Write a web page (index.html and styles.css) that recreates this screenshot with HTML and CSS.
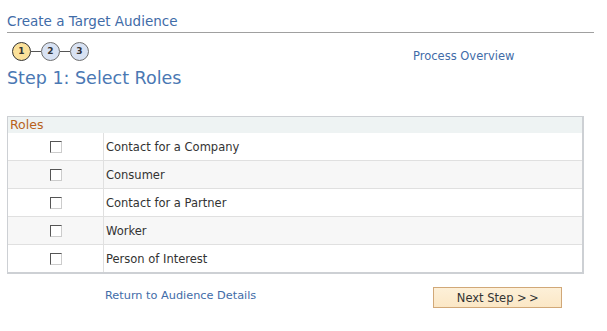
FILE: index.html
```html
<!DOCTYPE html>
<html>
<head>
<meta charset="utf-8">
<link rel="stylesheet" href="styles.css">
</head>
<body>
<div class="page">
  <div class="title">Create a Target Audience</div>
  <div class="steprow">
    <div class="steps">
      <span class="step current">1</span><span class="conn"></span><span class="step">2</span><span class="conn"></span><span class="step">3</span>
    </div>
    <a class="overview">Process Overview</a>
  </div>
  <h1 class="heading">Step 1: Select Roles</h1>
  <div class="grid">
    <div class="ghead">Roles</div>
    <div class="row"><div class="cb"><span class="box"></span></div><div class="lbl">Contact for a Company</div></div>
    <div class="row alt"><div class="cb"><span class="box"></span></div><div class="lbl">Consumer</div></div>
    <div class="row"><div class="cb"><span class="box"></span></div><div class="lbl">Contact for a Partner</div></div>
    <div class="row alt"><div class="cb"><span class="box"></span></div><div class="lbl">Worker</div></div>
    <div class="row last"><div class="cb"><span class="box"></span></div><div class="lbl">Person of Interest</div></div>
  </div>
  <div class="footer">
    <a class="ret">Return to Audience Details</a>
    <button class="next">Next Step &gt;&thinsp;&gt;</button>
  </div>
</div>
</body>
</html>
```
FILE: styles.css
```css
html, body { margin: 0; padding: 0; background: #fff; }
body { font-family: "DejaVu Sans", Verdana, sans-serif; }
.page { padding: 13px 13px 0 7px; width: 587px; }
.title { font-size: 13.5px; color: #3f6ca8; line-height: 16px; padding-bottom: 3px; border-bottom: 1px solid #a0a0a0; }
.steprow { display: flex; align-items: center; margin-top: 8px; height: 20px; }
.steps { display: flex; align-items: center; margin-left: 5px; width: 401px; }
.step { width: 17px; height: 17px; border: 1px solid #6e6e6e; border-radius: 50%; background: #d8e2f3; font-size: 9px; font-weight: bold; color: #333; display: flex; align-items: center; justify-content: center; line-height: 1; }
.step.current { background: #fbe19a; border-color: #333; }
.conn { width: 10px; height: 1px; background: #555; }
.overview { font-size: 11.5px; color: #3f6ca8; margin-top: 10px; }
.heading { font-size: 17.5px; font-weight: normal; color: #4a78b3; margin: 7px 0 0 0; line-height: 20px; }
.grid { margin-top: 28px; width: 574px; border: 1px solid #cdd0d4; border-width: 1px 2px 2px 1px; }
.ghead { background: #eef3f3; color: #b8621b; font-size: 12.5px; line-height: 16px; padding-left: 2px; height: 16px; }
.row { display: flex; height: 27px; border-top: 1px solid #e0e0e0; background: #fff; }
.row.alt { background: #f7f7f7; }
.row:nth-child(2) { border-top: none; height: 27px; }
.cb { width: 95px; border-right: 1px solid #e0e0e0; display: flex; align-items: center; justify-content: center; }
.box { width: 10px; height: 10px; border: 1px solid #888; border-right-color: #ccc; border-bottom-color: #ccc; border-top-color: #555; border-left-color: #555; background: #fff; margin-left: 1px; }
.lbl { font-size: 11.5px; color: #333; display: flex; align-items: center; padding-left: 2px; }
.footer { display: flex; align-items: center; margin-top: 13px; }
.ret { font-size: 11.3px; color: #3f6ca8; margin-left: 98px; margin-top: -4px; }
.next { margin-left: 177px; width: 129px; height: 21px; border: 1px solid #d1a878; background: linear-gradient(#fdf0d8, #fbe7c6); font-family: "DejaVu Sans", Verdana, sans-serif; font-size: 11.5px; color: #333; padding: 0; }
```
